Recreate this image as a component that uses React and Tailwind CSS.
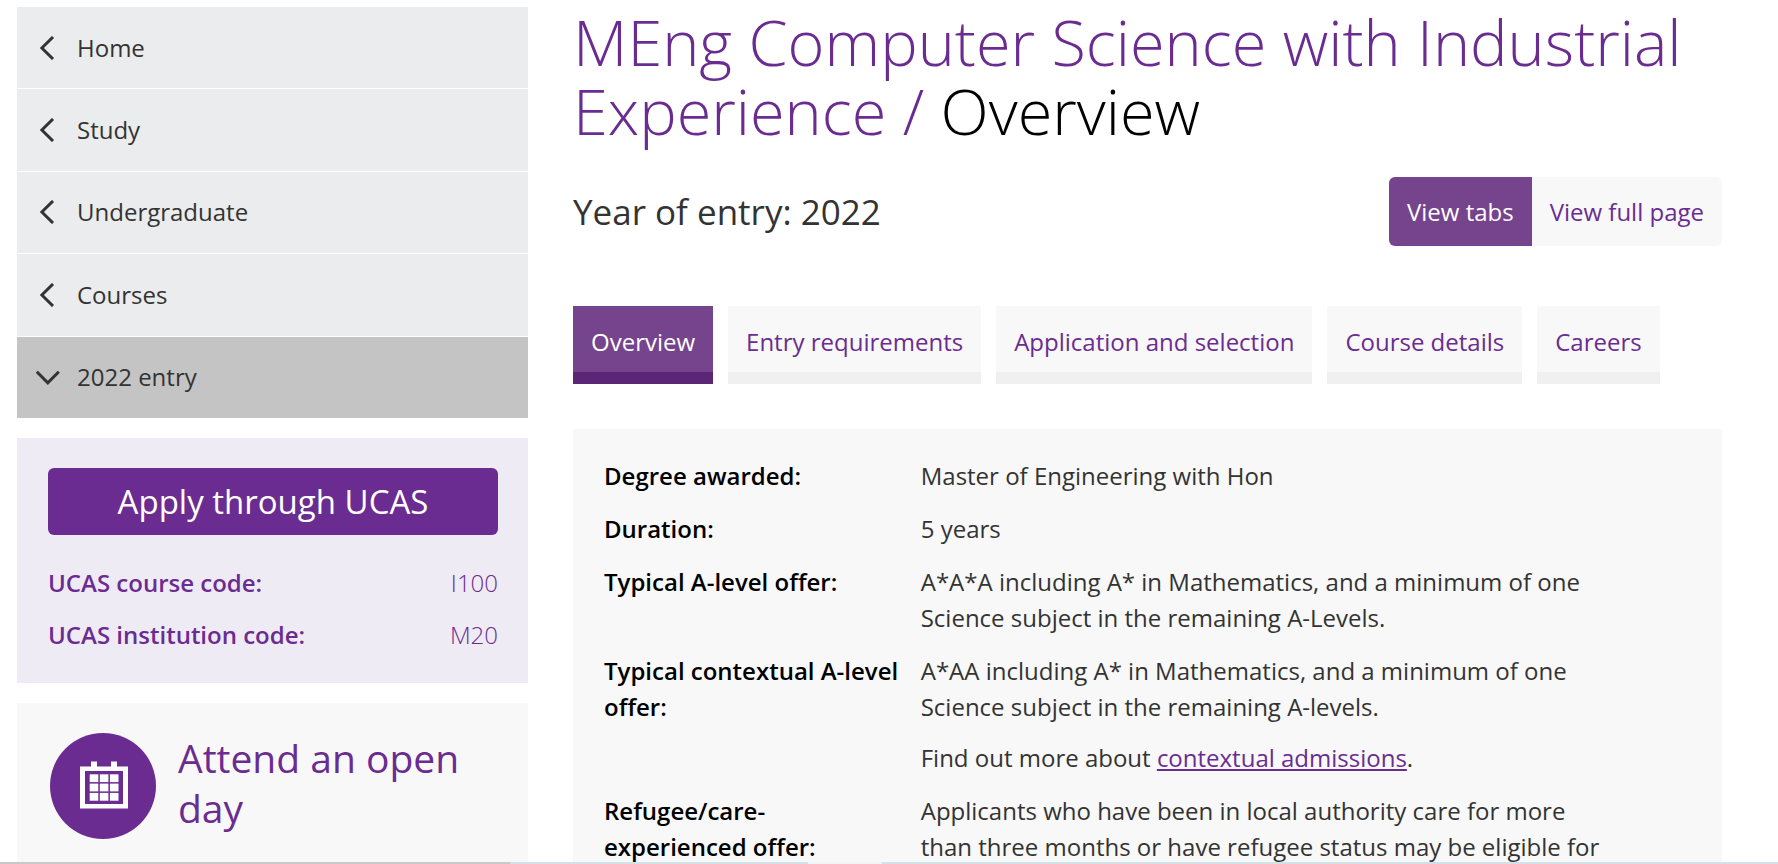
const navItems = ["Home", "Study", "Undergraduate", "Courses"];

const tabs = ["Entry requirements", "Application and selection", "Course details", "Careers"];

function ChevronLeft() {
  return (
    <svg viewBox="0 0 24 24" className="size-6 shrink-0" fill="none" stroke="#333" strokeWidth="3" aria-hidden="true">
      <path d="M17 1 5.9 12 17 23" />
    </svg>
  );
}

function ChevronDown() {
  return (
    <svg viewBox="0 0 24 24" className="size-6 shrink-0" fill="none" stroke="#333" strokeWidth="3" aria-hidden="true">
      <path d="M0.8 6.8 11.8 17.8 22.8 6.8" />
    </svg>
  );
}

function CalendarBadge() {
  const cells = [0, 1, 2];
  return (
    <svg viewBox="0 0 106 106" className="size-[106px] shrink-0" aria-hidden="true">
      <circle cx="53" cy="53" r="53" fill="#6b2c91" />
      <g fill="#fff">
        <rect x="41" y="28.5" width="6" height="6" />
        <rect x="61" y="28.5" width="6" height="6" />
        <path fillRule="evenodd" d="M30 33.5h48v42h-48zM35 38v33h38v-33z" />
        {cells.map((r) =>
          cells.map((c) => (
            <rect key={`${r}-${c}`} x={39.7 + c * 10.1} y={41.3 + r * 9.3} width="8.6" height="7.8" />
          ))
        )}
      </g>
    </svg>
  );
}

function Fact({ label, children }) {
  return (
    <div className="grid grid-cols-[317fr_772fr]">
      <dt className="pr-5 font-semibold text-black">{label}</dt>
      <dd className="flex flex-col gap-[15px] pr-20">{children}</dd>
    </div>
  );
}

export default function App() {
  return (
    <div className="relative h-screen overflow-hidden bg-white font-['Open_Sans','Noto_Sans',sans-serif] text-[24px] leading-9 text-[#333]">
      <div className="grid grid-cols-[511fr_1149fr] items-start gap-[45px] pt-[7px] pr-14 pl-[17px]">
        <aside className="flex flex-col gap-5">
          <nav aria-label="Section" className="grid min-h-[411px] auto-rows-fr gap-px">
            {navItems.map((item) => (
              <a key={item} href="#" className="flex items-center gap-[17px] bg-[#ebecee] px-[19px]">
                <ChevronLeft />
                {item}
              </a>
            ))}
            <a href="#" aria-current="page" className="flex items-center gap-[17px] bg-[#c4c4c4] px-[19px]">
              <ChevronDown />
              2022 entry
            </a>
          </nav>

          <section className="bg-[#efebf5] py-[30px] pr-[30px] pl-[31px] text-[#6b2c91]">
            <a href="#" className="block rounded-md bg-[#6b2c91] text-center text-[33px] leading-[67px] text-white">
              Apply through UCAS
            </a>
            <dl className="flex flex-col gap-4 pt-[30px]">
              <div className="flex justify-between">
                <dt className="font-semibold">UCAS course code:</dt>
                <dd className="font-light">I100</dd>
              </div>
              <div className="flex justify-between">
                <dt className="font-semibold">UCAS institution code:</dt>
                <dd className="font-light">M20</dd>
              </div>
            </dl>
          </section>

          <section className="flex gap-[22px] bg-[#f8f8f8] py-[30px] pr-8 pl-[33px] text-[#6b2c91]">
            <CalendarBadge />
            <h2 className="text-[39px] leading-[50px]">
              <a href="#">Attend an open day</a>
            </h2>
          </section>
        </aside>

        <main>
          <h1 className="text-[63px] leading-[69px] font-light text-[#6b2c91]">
            MEng Computer Science with Industrial Experience / <span className="text-black">Overview</span>
          </h1>

          <div className="flex items-center justify-between pt-8">
            <p className="text-[35px] leading-[52px]">Year of entry: 2022</p>
            <div className="flex overflow-hidden rounded-md leading-[69px]">
              <button type="button" aria-pressed="true" className="bg-[#75448c] px-[18px] text-white">
                View tabs
              </button>
              <button type="button" aria-pressed="false" className="bg-[#f8f8f8] px-[18px] text-[#6b2c91]">
                View full page
              </button>
            </div>
          </div>

          <div role="tablist" className="flex gap-[15px] pt-[60px]">
            <button type="button" role="tab" aria-selected="true" className="border-b-12 border-[#5b2676] bg-[#75448c] px-[18px] pt-[18px] pb-3 whitespace-nowrap text-white">
              Overview
            </button>
            {tabs.map((tab) => (
              <button key={tab} type="button" role="tab" aria-selected="false" className="border-b-12 border-[#f0f0f0] bg-[#f8f8f8] px-[18px] pt-[18px] pb-3 whitespace-nowrap text-[#6b2c91]">
                {tab}
              </button>
            ))}
          </div>

          <dl className="mt-[45px] flex flex-col gap-[17px] bg-[#f8f8f8] pt-[29px] pr-[30px] pb-[30px] pl-[31px]">
            <Fact label="Degree awarded:">
              <p>Master of Engineering with Hon</p>
            </Fact>
            <Fact label="Duration:">
              <p>5 years</p>
            </Fact>
            <Fact label="Typical A-level offer:">
              <p>A*A*A including A* in Mathematics, and a minimum of one Science subject in the remaining A-Levels.</p>
            </Fact>
            <Fact label="Typical contextual A-level offer:">
              <p>A*AA including A* in Mathematics, and a minimum of one Science subject in the remaining A-levels.</p>
              <p>
                Find out more about{" "}
                <a href="#" className="text-[#6b2c91] underline decoration-2 underline-offset-2">contextual admissions</a>.
              </p>
            </Fact>
            <Fact label="Refugee/care-experienced offer:">
              <p>Applicants who have been in local authority care for more than three months or have refugee status may be eligible for</p>
            </Fact>
          </dl>
        </main>
      </div>

      <div className="absolute inset-x-0 bottom-0 flex h-0.5 bg-[#d3e2e8]">
        <div className="w-[510px] bg-[#c9c9c9]" />
        <div className="ml-[298px] w-[74px] bg-[#f0f4f8]" />
      </div>
    </div>
  );
}
